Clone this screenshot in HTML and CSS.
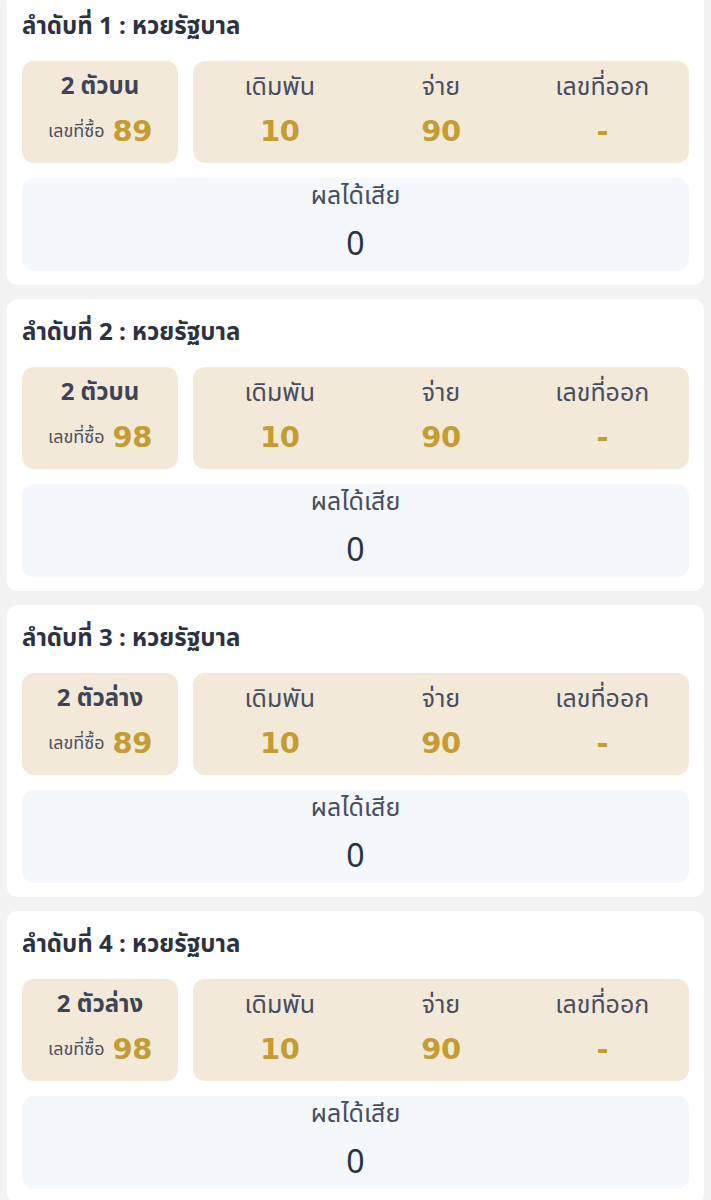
FILE: index.html
```html
<!DOCTYPE html>
<html lang="th">
<head>
  <meta charset="UTF-8" />
  <title>รายการแทง</title>
  <link rel="stylesheet" href="styles.css">
</head>
<body>

  <div class="list">

    <div class="card">
      <h3 class="card-title">ลำดับที่ 1 : หวยรัฐบาล</h3>
      <div class="row">
        <div class="type-box">
          <div class="type">2 ตัวบน</div>
          <div class="buy"><span class="buy-label">เลขที่ซื้อ</span> <span class="gold">89</span></div>
        </div>
        <div class="info-box">
          <div class="col"><div class="label">เดิมพัน</div><div class="gold">10</div></div>
          <div class="col"><div class="label">จ่าย</div><div class="gold">90</div></div>
          <div class="col"><div class="label">เลขที่ออก</div><div class="gold">-</div></div>
        </div>
      </div>
      <div class="result">
        <div class="label">ผลได้เสีย</div>
        <div class="result-value">0</div>
      </div>
    </div>

    <div class="card">
      <h3 class="card-title">ลำดับที่ 2 : หวยรัฐบาล</h3>
      <div class="row">
        <div class="type-box">
          <div class="type">2 ตัวบน</div>
          <div class="buy"><span class="buy-label">เลขที่ซื้อ</span> <span class="gold">98</span></div>
        </div>
        <div class="info-box">
          <div class="col"><div class="label">เดิมพัน</div><div class="gold">10</div></div>
          <div class="col"><div class="label">จ่าย</div><div class="gold">90</div></div>
          <div class="col"><div class="label">เลขที่ออก</div><div class="gold">-</div></div>
        </div>
      </div>
      <div class="result">
        <div class="label">ผลได้เสีย</div>
        <div class="result-value">0</div>
      </div>
    </div>

    <div class="card">
      <h3 class="card-title">ลำดับที่ 3 : หวยรัฐบาล</h3>
      <div class="row">
        <div class="type-box">
          <div class="type">2 ตัวล่าง</div>
          <div class="buy"><span class="buy-label">เลขที่ซื้อ</span> <span class="gold">89</span></div>
        </div>
        <div class="info-box">
          <div class="col"><div class="label">เดิมพัน</div><div class="gold">10</div></div>
          <div class="col"><div class="label">จ่าย</div><div class="gold">90</div></div>
          <div class="col"><div class="label">เลขที่ออก</div><div class="gold">-</div></div>
        </div>
      </div>
      <div class="result">
        <div class="label">ผลได้เสีย</div>
        <div class="result-value">0</div>
      </div>
    </div>

    <div class="card">
      <h3 class="card-title">ลำดับที่ 4 : หวยรัฐบาล</h3>
      <div class="row">
        <div class="type-box">
          <div class="type">2 ตัวล่าง</div>
          <div class="buy"><span class="buy-label">เลขที่ซื้อ</span> <span class="gold">98</span></div>
        </div>
        <div class="info-box">
          <div class="col"><div class="label">เดิมพัน</div><div class="gold">10</div></div>
          <div class="col"><div class="label">จ่าย</div><div class="gold">90</div></div>
          <div class="col"><div class="label">เลขที่ออก</div><div class="gold">-</div></div>
        </div>
      </div>
      <div class="result">
        <div class="label">ผลได้เสีย</div>
        <div class="result-value">0</div>
      </div>
    </div>

  </div>

</body>
</html>
```

FILE: styles.css
```css
body {
  margin: 0;
  font-family: "Noto Sans Thai", "Noto Sans", sans-serif;
  background-color: #f2f2f2;
  color: #2b3244;
}
.list {
  display: flex;
  flex-direction: column;
  gap: 14px;
  padding: 0 7px;
  margin-top: -7px;
}
.card {
  background-color: #fff;
  border-radius: 10px;
  padding: 16px 15px 14px;
}
.card-title {
  margin: 0 0 16px;
  font-size: 24px;
  font-weight: 700;
  line-height: 36px;
  color: #2b3244;
}
.row {
  display: flex;
  gap: 15px;
}
.type-box, .info-box {
  background-color: #f3e9d8;
  border-radius: 12px;
  height: 102px;
  box-sizing: border-box;
  padding-top: 10px;
}
.type-box {
  width: 156px;
  display: flex;
  flex-direction: column;
  align-items: center;
  gap: 8px;
}
.type {
  font-size: 24px;
  font-weight: 700;
  color: #3d4457;
  line-height: 32px;
}
.buy {
  display: flex;
  align-items: center;
  gap: 8px;
}
.buy-label {
  font-size: 18px;
  color: #4a5164;
}
.gold {
  font-family: "DejaVu Sans", sans-serif;
  font-size: 29px;
  font-weight: 700;
  letter-spacing: -0.5px;
  color: #c49c32;
  line-height: 40px;
}
.info-box {
  flex: 1;
  display: grid;
  grid-template-columns: 1fr 1fr 1fr;
  padding-left: 6px;
  padding-right: 6px;
}
.col {
  text-align: center;
}
.col .label {
  margin-bottom: 8px;
}
.label {
  font-size: 25px;
  color: #474e61;
  line-height: 32px;
}
.result {
  margin-top: 15px;
  background-color: #f4f7fb;
  border-radius: 12px;
  height: 93px;
  box-sizing: border-box;
  padding-top: 2px;
  display: flex;
  flex-direction: column;
  align-items: center;
  gap: 13px;
}
.result-value {
  font-size: 32px;
  color: #2b3244;
  line-height: 40px;
}
```
